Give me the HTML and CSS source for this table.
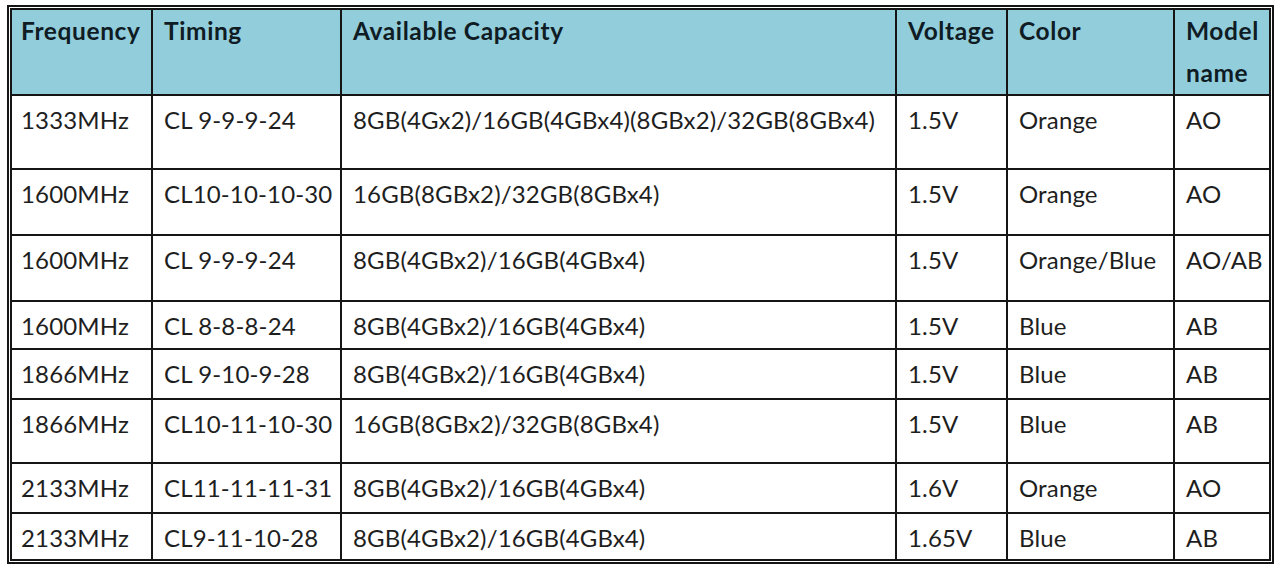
FILE: index.html
```html
<!DOCTYPE html>
<html lang="en">
<head>
<meta charset="utf-8">
<title>Memory specifications</title>
<link rel="stylesheet" href="styles.css">
</head>
<body>
<div class="frame">
<table class="spec">
<thead>
<tr>
<th class="c-freq">Frequency</th>
<th class="c-timing">Timing</th>
<th class="c-cap">Available Capacity</th>
<th class="c-volt">Voltage</th>
<th class="c-color">Color</th>
<th class="c-model">Model name</th>
</tr>
</thead>
<tbody>
<tr><td>1333MHz</td><td>CL 9-9-9-24</td><td>8GB(4Gx2)/16GB(4GBx4)(8GBx2)/32GB(8GBx4)</td><td>1.5V</td><td>Orange</td><td>AO</td></tr>
<tr><td>1600MHz</td><td>CL10-10-10-30</td><td>16GB(8GBx2)/32GB(8GBx4)</td><td>1.5V</td><td>Orange</td><td>AO</td></tr>
<tr><td>1600MHz</td><td>CL 9-9-9-24</td><td>8GB(4GBx2)/16GB(4GBx4)</td><td>1.5V</td><td>Orange/Blue</td><td>AO/AB</td></tr>
<tr><td>1600MHz</td><td>CL 8-8-8-24</td><td>8GB(4GBx2)/16GB(4GBx4)</td><td>1.5V</td><td>Blue</td><td>AB</td></tr>
<tr><td>1866MHz</td><td>CL 9-10-9-28</td><td>8GB(4GBx2)/16GB(4GBx4)</td><td>1.5V</td><td>Blue</td><td>AB</td></tr>
<tr><td>1866MHz</td><td>CL10-11-10-30</td><td>16GB(8GBx2)/32GB(8GBx4)</td><td>1.5V</td><td>Blue</td><td>AB</td></tr>
<tr><td>2133MHz</td><td>CL11-11-11-31</td><td>8GB(4GBx2)/16GB(4GBx4)</td><td>1.6V</td><td>Orange</td><td>AO</td></tr>
<tr><td>2133MHz</td><td>CL9-11-10-28</td><td>8GB(4GBx2)/16GB(4GBx4)</td><td>1.65V</td><td>Blue</td><td>AB</td></tr>
</tbody>
</table>
</div>
</body>
</html>
```
FILE: styles.css
```css
html, body {
  margin: 0;
  padding: 0;
  background: #ffffff;
}

.frame {
  margin: 5px 0 0 7px;
  width: max-content;
  border: 2px solid #151515;
  padding: 1px;
}

.spec {
  border: 2px solid #151515;
  border-collapse: separate;
  border-spacing: 0;
  table-layout: fixed;
  width: 1261px;
  font-family: Lato, "Open Sans", sans-serif;
  font-size: 24px;
  letter-spacing: 0.15px;
  line-height: 42px;
  color: #1e1e1e;
}

.spec th,
.spec td {
  box-sizing: border-box;
  text-align: left;
  vertical-align: top;
  padding: 3px 2px 0 11px;
  border-right: 2px solid #151515;
  border-bottom: 2px solid #151515;
  overflow: hidden;
  white-space: nowrap;
}

.spec th:last-child,
.spec td:last-child {
  border-right: none;
}

.spec tbody tr:last-child td {
  border-bottom: none;
}

.spec th:first-child,
.spec td:first-child {
  padding-left: 9px;
}

.spec th {
  background: #92cddc;
  font-weight: 700;
  font-size: 24.5px;
  letter-spacing: 0.6px;
  color: #0f1c24;
  padding-top: 0;
}

.spec th.c-model {
  white-space: normal;
}

.c-freq { width: 141px; }
.c-timing { width: 189px; }
.c-cap { width: 555px; }
.c-volt { width: 111px; }
.c-color { width: 167px; }
.c-model { width: 94px; }

.spec thead tr { height: 86px; }
.spec tbody tr:nth-child(1) { height: 74px; }
.spec tbody tr:nth-child(2) { height: 66px; }
.spec tbody tr:nth-child(3) { height: 66px; }
.spec tbody tr:nth-child(4) { height: 48px; }
.spec tbody tr:nth-child(5) { height: 50px; }
.spec tbody tr:nth-child(6) { height: 64px; }
.spec tbody tr:nth-child(7) { height: 50px; }
.spec tbody tr:nth-child(8) { height: 43px; }
```
